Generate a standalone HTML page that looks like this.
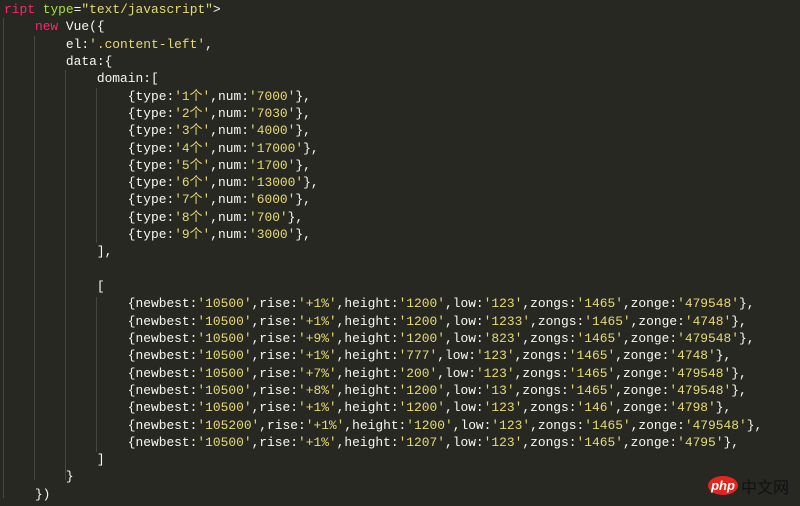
<!DOCTYPE html>
<html><head><meta charset="utf-8"><style>
html,body{margin:0;padding:0;background:#272822;width:800px;height:506px;overflow:hidden}
pre{position:absolute;left:4px;top:1px;margin:0;font-family:"Liberation Mono","Noto Sans CJK SC",monospace;font-size:12.9px;line-height:17.32px;color:#f8f8f2;white-space:pre}
.s{color:#e6db74}.k{color:#f92672}.a{color:#a6e22e}
.g{position:absolute;width:1px;background:#464741}
.logo{position:absolute;left:708px;top:476px;width:30px;height:19px;border-radius:50%;background:#e3261d;color:#fff;font:italic bold 13px "Liberation Sans",sans-serif;text-align:center;line-height:19px}
.cn{position:absolute;left:741px;top:476px;font:16px "Noto Sans CJK SC",sans-serif;color:#111;line-height:20px}
</style></head><body>
<div class="g" style="left:3px;top:18px;height:480px"></div>
<div class="g" style="left:34px;top:36px;height:444px"></div>
<div class="g" style="left:65px;top:70px;height:410px"></div>
<div class="g" style="left:96px;top:88px;height:155px"></div>
<div class="g" style="left:96px;top:297px;height:155px"></div>
<pre><span class="k">ript</span> <span class="a">type</span>=<span class="s">"text/javascript"</span>&gt;
    <span class="k">new</span> Vue({
        el:<span class="s">'.content-left'</span>,
        data:{
            domain:[
                {type:<span class="s">'1个'</span>,num:<span class="s">'7000'</span>},
                {type:<span class="s">'2个'</span>,num:<span class="s">'7030'</span>},
                {type:<span class="s">'3个'</span>,num:<span class="s">'4000'</span>},
                {type:<span class="s">'4个'</span>,num:<span class="s">'17000'</span>},
                {type:<span class="s">'5个'</span>,num:<span class="s">'1700'</span>},
                {type:<span class="s">'6个'</span>,num:<span class="s">'13000'</span>},
                {type:<span class="s">'7个'</span>,num:<span class="s">'6000'</span>},
                {type:<span class="s">'8个'</span>,num:<span class="s">'700'</span>},
                {type:<span class="s">'9个'</span>,num:<span class="s">'3000'</span>},
            ],

            [
                {newbest:<span class="s">'10500'</span>,rise:<span class="s">'+1%'</span>,height:<span class="s">'1200'</span>,low:<span class="s">'123'</span>,zongs:<span class="s">'1465'</span>,zonge:<span class="s">'479548'</span>},
                {newbest:<span class="s">'10500'</span>,rise:<span class="s">'+1%'</span>,height:<span class="s">'1200'</span>,low:<span class="s">'1233'</span>,zongs:<span class="s">'1465'</span>,zonge:<span class="s">'4748'</span>},
                {newbest:<span class="s">'10500'</span>,rise:<span class="s">'+9%'</span>,height:<span class="s">'1200'</span>,low:<span class="s">'823'</span>,zongs:<span class="s">'1465'</span>,zonge:<span class="s">'479548'</span>},
                {newbest:<span class="s">'10500'</span>,rise:<span class="s">'+1%'</span>,height:<span class="s">'777'</span>,low:<span class="s">'123'</span>,zongs:<span class="s">'1465'</span>,zonge:<span class="s">'4748'</span>},
                {newbest:<span class="s">'10500'</span>,rise:<span class="s">'+7%'</span>,height:<span class="s">'200'</span>,low:<span class="s">'123'</span>,zongs:<span class="s">'1465'</span>,zonge:<span class="s">'479548'</span>},
                {newbest:<span class="s">'10500'</span>,rise:<span class="s">'+8%'</span>,height:<span class="s">'1200'</span>,low:<span class="s">'13'</span>,zongs:<span class="s">'1465'</span>,zonge:<span class="s">'479548'</span>},
                {newbest:<span class="s">'10500'</span>,rise:<span class="s">'+1%'</span>,height:<span class="s">'1200'</span>,low:<span class="s">'123'</span>,zongs:<span class="s">'146'</span>,zonge:<span class="s">'4798'</span>},
                {newbest:<span class="s">'105200'</span>,rise:<span class="s">'+1%'</span>,height:<span class="s">'1200'</span>,low:<span class="s">'123'</span>,zongs:<span class="s">'1465'</span>,zonge:<span class="s">'479548'</span>},
                {newbest:<span class="s">'10500'</span>,rise:<span class="s">'+1%'</span>,height:<span class="s">'1207'</span>,low:<span class="s">'123'</span>,zongs:<span class="s">'1465'</span>,zonge:<span class="s">'4795'</span>},
            ]
        }
    })</pre>
<div class="logo">php</div>
<div class="cn">中文网</div>
</body></html>
